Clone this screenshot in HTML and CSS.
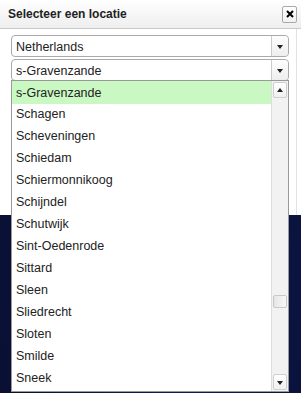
FILE: index.html
```html
<!DOCTYPE html>
<html>
<head>
<meta charset="utf-8">
<link rel="stylesheet" href="styles.css">
</head>
<body>
<div class="dialog">
  <div class="header">
    <span class="title">Selecteer een locatie</span>
    <button class="close" aria-label="close">
      <svg width="8" height="8" viewBox="0 0 8 8"><path d="M1 1L7 7M7 1L1 7" stroke="#000" stroke-width="2"/></svg>
    </button>
  </div>
  <div class="content">
    <div class="select">
      <span class="value">Netherlands</span>
      <span class="arrow"><i class="tri-down"></i></span>
    </div>
    <div class="select">
      <span class="value">s-Gravenzande</span>
      <span class="arrow"><i class="tri-down"></i></span>
    </div>
  </div>
</div>
<div class="list">
  <ul class="items">
    <li class="active">s-Gravenzande</li>
    <li>Schagen</li>
    <li>Scheveningen</li>
    <li>Schiedam</li>
    <li>Schiermonnikoog</li>
    <li>Schijndel</li>
    <li>Schutwijk</li>
    <li>Sint-Oedenrode</li>
    <li>Sittard</li>
    <li>Sleen</li>
    <li>Sliedrecht</li>
    <li>Sloten</li>
    <li>Smilde</li>
    <li>Sneek</li>
  </ul>
  <div class="scrollbar">
    <div class="sbtn"><i class="tri-up"></i></div>
    <div class="track"><div class="thumb"></div></div>
    <div class="sbtn"><i class="tri-down"></i></div>
  </div>
</div>
</body>
</html>
```
FILE: styles.css
```css
* { box-sizing: border-box; }
html, body { margin: 0; padding: 0; }
body {
  width: 301px;
  height: 393px;
  overflow: hidden;
  position: relative;
  font-family: "Liberation Sans", Arial, sans-serif;
  color: #333;
  background: radial-gradient(ellipse at 60% 70%, #16246a 0%, #0b1440 45%, #070c28 100%);
}
.dialog {
  width: 301px;
  height: 215px;
  background: #fff;
  display: flex;
  flex-direction: column;
  position: relative;
}
.dialog::after {
  content: "";
  position: absolute;
  top: 29px;
  bottom: 0;
  left: 296px;
  width: 1px;
  background: #e2e2e2;
}
.header {
  height: 29px;
  flex: none;
  display: flex;
  align-items: center;
  justify-content: space-between;
  padding: 0 4px 0 8px;
  background: linear-gradient(#ffffff, #eeeeee);
  border-bottom: 1px solid #c8c8c8;
}
.title {
  font-size: 12px;
  font-weight: bold;
  color: #222;
}
.close {
  width: 15px;
  height: 17px;
  padding: 0;
  margin: 0;
  border: 1px solid #a8a8a8;
  border-radius: 2px;
  background: linear-gradient(#ffffff, #f2f2f2);
  display: flex;
  align-items: center;
  justify-content: center;
}
.content {
  padding: 6px 12px 0 11px;
  display: flex;
  flex-direction: column;
  gap: 2px;
}
.select {
  height: 22px;
  border: 1px solid #aaa;
  border-radius: 4px;
  display: flex;
  align-items: center;
  background: #fff;
}
.value {
  flex: 1;
  font-size: 12.5px;
  padding-left: 4px;
  padding-top: 1px;
  color: #222;
}
.arrow {
  width: 17px;
  align-self: stretch;
  border-left: 1px solid #ccc;
  border-radius: 0 4px 4px 0;
  background: linear-gradient(#fdfdfd, #eeeeee);
  display: flex;
  align-items: center;
  justify-content: center;
}
.tri-down {
  width: 0; height: 0;
  border-left: 3px solid transparent;
  border-right: 3px solid transparent;
  border-top: 4px solid #222;
  margin-top: 2px;
}
.tri-up {
  width: 0; height: 0;
  border-left: 3px solid transparent;
  border-right: 3px solid transparent;
  border-bottom: 4px solid #222;
}
.list {
  position: absolute;
  left: 11px;
  top: 80px;
  width: 278px;
  height: 312px;
  border: 1px solid #999;
  background: #fff;
  display: flex;
}
.items {
  list-style: none;
  margin: 0;
  padding: 0;
  flex: 1;
}
.items li {
  height: 22px;
  line-height: 21px;
  padding-top: 1px;
  font-size: 12.5px;
  padding-left: 4px;
  color: #222;
}
.items li.active {
  height: 23px;
  padding-top: 2px;
  margin-bottom: -1px;
  background: #c9f8c2;
}
.scrollbar {
  width: 17px;
  flex: none;
  display: flex;
  flex-direction: column;
  background: #f2f2f2;
  border-left: 1px solid #ddd;
  padding: 1px 0;
}
.sbtn {
  height: 16px;
  margin: 0 1px;
  background: linear-gradient(#ffffff, #f0f0f0);
  border: 1px solid #cfcfcf;
  border-radius: 2px;
  display: flex;
  align-items: center;
  justify-content: center;
}
.track {
  flex: 1;
  position: relative;
}
.thumb {
  position: absolute;
  left: 1px;
  right: 1px;
  top: 197px;
  height: 13px;
  background: linear-gradient(90deg, #e6e6e6, #f8f8f8);
  border: 1px solid #c8c8c8;
  border-radius: 2px;
}
```
